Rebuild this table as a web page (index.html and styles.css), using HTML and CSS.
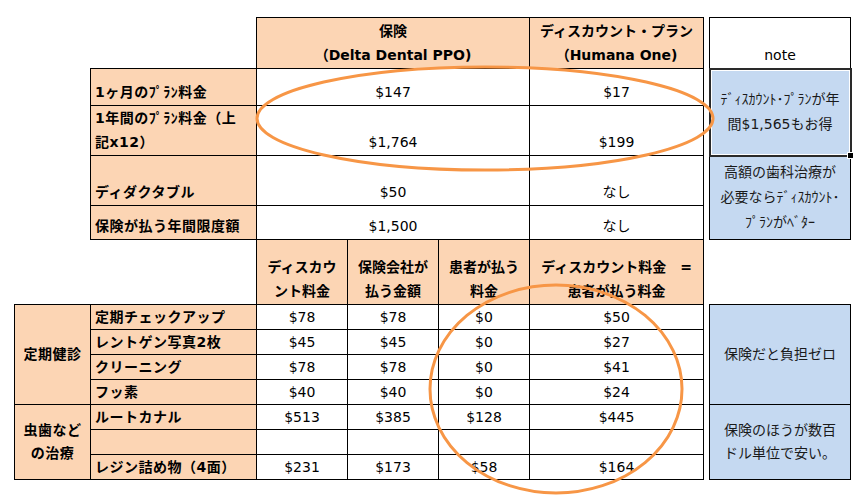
FILE: index.html
```
<!DOCTYPE html>
<html lang="ja">
<head>
<meta charset="utf-8">
<title>保険とディスカウント・プランの比較</title>
<link rel="stylesheet" href="styles.css">
</head>
<body>
<div class="sheet">
  <table class="grid">
    <colgroup>
      <col class="c-a"><col class="c-b"><col class="c-v"><col class="c-v"><col class="c-v"><col class="c-f"><col class="c-gap"><col class="c-note">
    </colgroup>
    <tr class="r-head">
      <td class="blank" colspan="2"></td>
      <th class="hd" colspan="3">保険<br>（Delta Dental PPO)</th>
      <th class="hd">ディスカウント・プラン<br>（Humana One)</th>
      <td class="blank" rowspan="13"></td>
      <td class="note-head">note</td>
    </tr>
    <tr class="r-1">
      <td class="blank" rowspan="4"></td>
      <th class="lbl">1ヶ月のﾌﾟﾗﾝ料金</th>
      <td class="val" colspan="3">$147</td>
      <td class="val">$17</td>
      <td class="note note-sel" rowspan="2">ﾃﾞｨｽｶｳﾝﾄ･ﾌﾟﾗﾝが年<br>間$1,565もお得</td>
    </tr>
    <tr class="r-2">
      <th class="lbl">1年間のﾌﾟﾗﾝ料金（上<br>記x12）</th>
      <td class="val" colspan="3">$1,764</td>
      <td class="val">$199</td>
    </tr>
    <tr class="r-3">
      <th class="lbl">ディダクタブル</th>
      <td class="val" colspan="3">$50</td>
      <td class="val">なし</td>
      <td class="note" rowspan="2">高額の歯科治療が<br>必要ならﾃﾞｨｽｶｳﾝﾄ･<br>ﾌﾟﾗﾝがﾍﾞﾀｰ</td>
    </tr>
    <tr class="r-4">
      <th class="lbl">保険が払う年間限度額</th>
      <td class="val" colspan="3">$1,500</td>
      <td class="val">なし</td>
    </tr>
    <tr class="r-head2">
      <td class="blank" colspan="2"></td>
      <th class="hd">ディスカウ<br>ント料金</th>
      <th class="hd">保険会社が<br>払う金額</th>
      <th class="hd">患者が払う<br>料金</th>
      <th class="hd">ディスカウント料金　=<br>患者が払う料金</th>
      <td class="blank"></td>
    </tr>
    <tr class="r-s">
      <th class="grp" rowspan="4">定期健診</th>
      <th class="lbl">定期チェックアップ</th>
      <td class="val">$78</td>
      <td class="val">$78</td>
      <td class="val">$0</td>
      <td class="val">$50</td>
      <td class="note" rowspan="4">保険だと負担ゼロ</td>
    </tr>
    <tr class="r-s">
      <th class="lbl">レントゲン写真2枚</th>
      <td class="val">$45</td>
      <td class="val">$45</td>
      <td class="val">$0</td>
      <td class="val">$27</td>
    </tr>
    <tr class="r-s">
      <th class="lbl">クリーニング</th>
      <td class="val">$78</td>
      <td class="val">$78</td>
      <td class="val">$0</td>
      <td class="val">$41</td>
    </tr>
    <tr class="r-s">
      <th class="lbl">フッ素</th>
      <td class="val">$40</td>
      <td class="val">$40</td>
      <td class="val">$0</td>
      <td class="val">$24</td>
    </tr>
    <tr class="r-s">
      <th class="grp" rowspan="3">虫歯など<br>の治療</th>
      <th class="lbl">ルートカナル</th>
      <td class="val">$513</td>
      <td class="val">$385</td>
      <td class="val">$128</td>
      <td class="val">$445</td>
      <td class="note" rowspan="3">保険のほうが数百<br>ドル単位で安い。</td>
    </tr>
    <tr class="r-s">
      <th class="lbl"></th>
      <td class="val"></td>
      <td class="val"></td>
      <td class="val"></td>
      <td class="val"></td>
    </tr>
    <tr class="r-s">
      <th class="lbl">レジン詰め物（4面）</th>
      <td class="val">$231</td>
      <td class="val">$173</td>
      <td class="val">$58</td>
      <td class="val">$164</td>
    </tr>
  </table>
  <svg class="marks" width="868" height="497" viewBox="0 0 868 497" aria-hidden="true">
    <ellipse cx="485" cy="118.5" rx="228" ry="51.5" fill="none" stroke="#F79646" stroke-width="3"/>
    <ellipse cx="556" cy="389" rx="126" ry="104" fill="none" stroke="#F79646" stroke-width="3"/>
  </svg>
</div>
</body>
</html>
```
FILE: styles.css
```
html, body {
  margin: 0;
  background: #fff;
}
body {
  font-family: "DejaVu Sans", "Noto Sans CJK JP", sans-serif;
  font-size: 14px;
  color: #000;
}
.sheet {
  position: relative;
  width: 868px;
  height: 497px;
  box-sizing: border-box;
  padding: 17px 0 0 14px;
}
.grid {
  border-collapse: collapse;
  table-layout: fixed;
  width: 836px;
}
.c-a { width: 76px; }
.c-b { width: 166px; }
.c-v { width: 91px; }
.c-f { width: 174px; }
.c-gap { width: 6px; }
.c-note { width: 141px; }

.grid td, .grid th {
  border: 1px solid #000;
  padding: 0 2px 1px;
  line-height: 24px;
  vertical-align: bottom;
  text-align: center;
  font-weight: normal;
  white-space: nowrap;
  overflow: hidden;
}
.grid .blank {
  border: none;
}
.r-head { height: 51px; }
.r-1 { height: 37px; }
.r-2 { height: 49px; }
.r-3 { height: 50px; }
.r-4 { height: 34px; }
.r-head2 { height: 65px; }
.r-s { height: 25px; }
.grid .r-s td, .grid .r-s th {
  line-height: 23px;
  padding-bottom: 0;
}

.grid .hd {
  background: #FCD5B4;
  font-weight: bold;
}
.grid .lbl {
  background: #FCD5B4;
  font-weight: bold;
  text-align: left;
  padding-left: 4px;
  letter-spacing: 0.5px;
}
.grid .grp {
  background: #FCD5B4;
  font-weight: bold;
  vertical-align: middle;
  letter-spacing: 0.5px;
}
.grid .note {
  background: #C5D9F1;
  vertical-align: middle;
  line-height: 25px;
  color: #1a1a1a;
}
.grid .note-sel {
  position: relative;
  border: 2px solid #2a2a2a;
  box-shadow: inset 0 0 0 1px #fff;
  overflow: visible;
}
.grid .note-sel::after {
  content: "";
  position: absolute;
  right: -4px;
  bottom: -4px;
  width: 5px;
  height: 5px;
  background: #000;
  border: 1px solid #fff;
}
.marks {
  position: absolute;
  left: 0;
  top: 0;
  pointer-events: none;
}
```
